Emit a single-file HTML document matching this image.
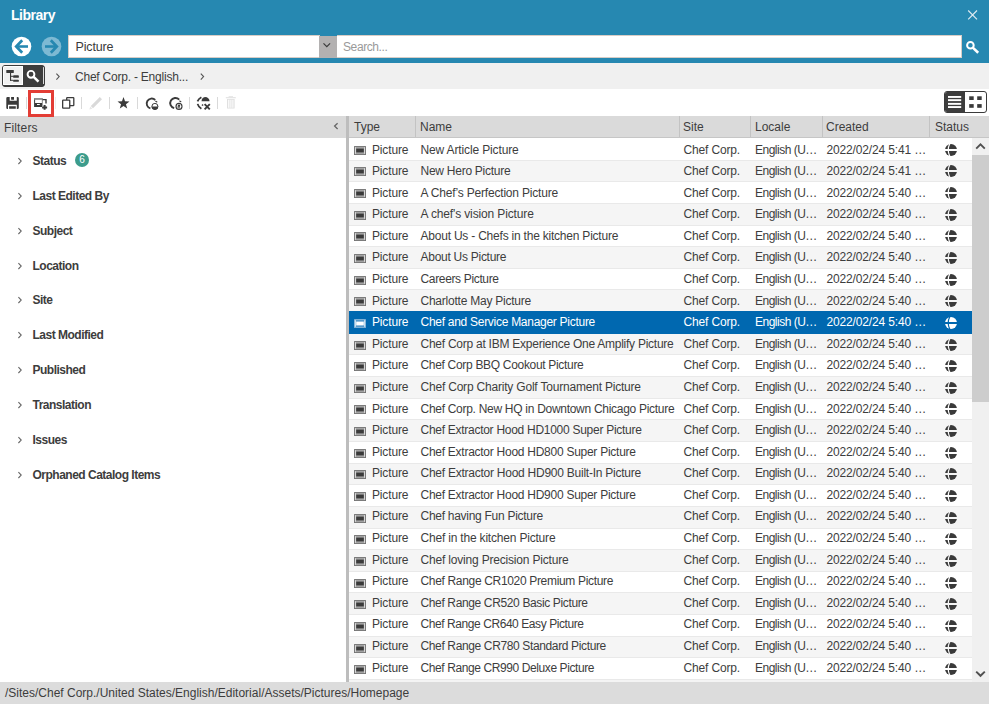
<!DOCTYPE html>
<html><head><meta charset="utf-8">
<style>
*{margin:0;padding:0;box-sizing:border-box}
html,body{width:989px;height:704px;overflow:hidden;background:#fff}
body{position:relative;font-family:"Liberation Sans",sans-serif;color:#3d3d3d;font-size:12px}
.abs{position:absolute}
#hdr{position:absolute;left:0;top:0;width:989px;height:63px;background:#2688b1}
#title{position:absolute;left:11px;top:7px;font-size:14px;font-weight:bold;color:#fff;line-height:16px;letter-spacing:-0.5px}
#bc{position:absolute;left:0;top:63px;width:989px;height:26px;background:#f0f0f0}
#tb{position:absolute;left:0;top:89px;width:989px;height:27px;background:#fff}
.sep{position:absolute;top:97px;width:1px;height:12px;background:#d9d9d9}
#lp{position:absolute;left:0;top:116px;width:346px;height:566px;background:#fff}
#lph{position:absolute;left:0;top:0;width:346px;height:22px;background:#dadada}
#split{position:absolute;left:346px;top:116px;width:3px;height:566px;background:#bdbdbd}
#grid{position:absolute;left:349px;top:116px;width:640px;height:566px;background:#f4f4f4}
#gh{position:absolute;left:0;top:0;width:640px;height:22px;background:#dadada;border-bottom:1px solid #c6c6c6}
.hc{position:absolute;top:0;height:21px;line-height:14px;padding-top:4px;white-space:nowrap}
.hd{position:absolute;top:0;width:1px;height:21px;background:#c3c3c3}
#rows{position:absolute;left:0;top:22px;width:623px;height:544px;overflow:hidden}
.r{position:absolute;left:349px;width:623px;height:21.64px;background:#fff}
.r::before{content:"";position:absolute;left:0;top:0;width:623px;height:1px;background:#e9e9e9}
.r.first::before{display:none}
.r.odd{background:#f5f5f5}
.r.sel{background:#0068b0;color:#fff}
.r.sel::before{background:#0068b0}
.r.aftersel::before{background:#0068b0}
.c{position:absolute;top:var(--dy);line-height:14px;white-space:nowrap;letter-spacing:-0.15px}
.c1{left:23px}
.c2{left:71.5px}
.c3{left:334.5px}
.c4{left:406px;letter-spacing:-0.5px}
.c5{left:477.5px}
.pi{position:absolute;left:5px;top:7.8px}
.gl{position:absolute;left:595px;top:4.8px}
#sb{position:absolute;left:972px;top:138px;width:17px;height:544px;background:#f0f0f0}
#thumb{position:absolute;left:0;top:17px;width:17px;height:247px;background:#cdcdcd}
#ftr{position:absolute;left:0;top:682px;width:989px;height:22px;background:#dcdcdc}
#ftr span{position:absolute;left:5px;top:4px;line-height:14px;white-space:nowrap}
.fi{position:absolute;left:0;height:16px;width:340px}
.fi .chev{position:absolute;left:16px;top:3.5px}
.fi .fl{position:absolute;left:32.5px;top:1.5px;font-weight:bold;line-height:14px;letter-spacing:-0.5px;white-space:nowrap}
.badge{position:absolute;left:75px;top:1px;width:14px;height:14px;border-radius:7px;background:#3c9c8c;color:#fff;font-size:10px;line-height:14px;text-align:center;font-weight:normal}
</style></head>
<body>
<div id="hdr">
  <div id="title">Library</div>
  <svg class="abs" style="left:966px;top:8px" width="13" height="13" viewBox="0 0 13 13"><path d="M2.2 2.5 L11 11.3 M11 2.5 L2.2 11.3" stroke="#dbe9f0" stroke-width="1.2"/></svg>
  <!-- back -->
  <svg class="abs" style="left:11px;top:36px" width="21" height="21" viewBox="0 0 21 21"><circle cx="10.5" cy="10.5" r="9.8" fill="#fff"/><path d="M5 10.5 H17" fill="none" stroke="#2688b1" stroke-width="2.6"/><path d="M11.2 4.3 L5.2 10.5 L11.2 16.7" fill="none" stroke="#2688b1" stroke-width="2.7"/></svg>
  <!-- forward -->
  <svg class="abs" style="left:41px;top:36px" width="21" height="21" viewBox="0 0 21 21"><circle cx="10.5" cy="10.5" r="9.8" fill="#7db9d3"/><path d="M4 10.5 H16" fill="none" stroke="#2688b1" stroke-width="2.6"/><path d="M9.8 4.3 L15.8 10.5 L9.8 16.7" fill="none" stroke="#2688b1" stroke-width="2.7"/></svg>
  <div class="abs" style="left:68px;top:35px;width:252px;height:23px;background:#fff;border:1px solid #d8cdc6"></div>
  <div class="abs" style="left:75.5px;top:39.5px;font-size:12.5px;line-height:14px;color:#3a3a3a;letter-spacing:-0.15px">Picture</div>
  <div class="abs" style="left:319px;top:35.5px;width:18px;height:22px;background:#b3b1b1"></div>
  <svg class="abs" style="left:322px;top:41px" width="10" height="8" viewBox="0 0 10 8"><path d="M1.5 2.3 L4.8 5.6 L8.1 2.3" fill="none" stroke="#3a3a3a" stroke-width="1.2"/></svg>
  <div class="abs" style="left:337px;top:35px;width:625px;height:23px;background:#fff;border:1px solid #d8cdc6;border-left:0"></div>
  <div class="abs" style="left:343px;top:40px;line-height:14px;color:#9a9a9a;letter-spacing:-0.4px">Search...</div>
  <svg class="abs" style="left:964px;top:39px" width="17" height="16" viewBox="0 0 17 16"><circle cx="6.4" cy="6.2" r="3.3" fill="none" stroke="#fff" stroke-width="2"/><path d="M8.8 8.6 L14.2 13.8" stroke="#fff" stroke-width="2.6" stroke-linecap="butt"/></svg>
</div>

<div id="bc">
  <div class="abs" style="left:2px;top:2px;width:43px;height:22px;border:1.5px solid #3a3a3a;border-radius:3px;background:#3d3d3d;overflow:hidden">
    <div class="abs" style="left:0;top:0;width:20px;height:19px;background:#f0f0f0;border:1px solid #fff"></div>
    <div class="abs" style="left:40px;top:1px;width:1px;height:17px;background:#ddd"></div>
  </div>
  <svg class="abs" style="left:5px;top:5px" width="16" height="16" viewBox="0 0 16 16"><rect x="1.3" y="2.1" width="7.5" height="2.8" rx="0.3" fill="#3a3a3a"/><rect x="5" y="4.8" width="1.1" height="8" fill="#3a3a3a"/><rect x="5" y="7.8" width="3.4" height="1" fill="#3a3a3a"/><rect x="5" y="11.8" width="3.4" height="1" fill="#3a3a3a"/><rect x="8.1" y="7.3" width="5.8" height="2.5" rx="0.9" fill="#3a3a3a"/><rect x="8.1" y="11.7" width="5.8" height="2.1" rx="0.9" fill="#3a3a3a"/></svg>
  <svg class="abs" style="left:24px;top:3px" width="18" height="18" viewBox="0 0 18 18"><circle cx="7" cy="8.3" r="3.4" fill="none" stroke="#fff" stroke-width="1.9"/><path d="M9.4 10.6 L14.5 15.6" stroke="#fff" stroke-width="2.6"/></svg>
  <svg class="abs" style="left:54px;top:9px" width="8" height="10" viewBox="0 0 8 10"><path d="M2.4 1.6 L5.2 4.6 L2.4 7.6" fill="none" stroke="#555" stroke-width="1.1"/></svg>
  <div class="abs" style="left:75px;top:6.5px;line-height:14px;color:#3d3d3d;letter-spacing:-0.22px">Chef Corp. - English...</div>
  <svg class="abs" style="left:198px;top:9px" width="8" height="10" viewBox="0 0 8 10"><path d="M2.8 1.6 L5.6 4.6 L2.8 7.6" fill="none" stroke="#555" stroke-width="1.1"/></svg>
</div>

<div id="tb">
  <!-- save -->
  <svg class="abs" style="left:6px;top:8px" width="14" height="13" viewBox="0 0 14 13"><path fill="#3a3a3a" d="M1.5 0 H3.7 V3.8 H10.8 V0 H11.5 Q12.8 0 12.8 1.3 V10.7 Q12.8 12 11.5 12 H10.8 V7.8 H2 V12 H1.5 Q0.3 12 0.3 10.7 V1.3 Q0.3 0 1.5 0 Z M5.1 0.1 H8 V2.8 H5.1 Z M3.1 9.2 H9.8 V11.8 H3.1 Z"/></svg>
  <div class="sep" style="left:26px;top:8px"></div>
  <!-- red box -->
  <div class="abs" style="left:28px;top:0.8px;width:26px;height:26.8px;border:3px solid #e33d35;z-index:5"></div>
  <svg class="abs" style="left:33px;top:8px" width="16" height="14" viewBox="0 0 16 14"><path fill="#3a3a3a" d="M1.1 1.1 H9.5 V10 H1.1 Z M2.1 2.6 V6 H8.9 V2.6 Z M4 7.1 V8.1 H6.8 V7.1 Z" fill-rule="evenodd"/><rect x="1.1" y="1.1" width="8.4" height="1.5" fill="#9a9a9a"/><path d="M9.5 2.6 H13 V6.6" fill="none" stroke="#3a3a3a" stroke-width="1.4"/><path d="M11.6 8.2 V12.6 M9.2 10.4 H14" stroke="#fff" stroke-width="3.2"/><path d="M11.6 8 V12.8 M9.1 10.4 H14.1" stroke="#3a3a3a" stroke-width="2"/></svg>
  <div class="sep" style="left:55px;top:8px;background:#eee"></div>
  <!-- copy -->
  <svg class="abs" style="left:61px;top:7px" width="14" height="13" viewBox="0 0 14 13"><rect x="5.7" y="1.65" width="7.1" height="7.9" rx="0.6" fill="#fff" stroke="#3a3a3a" stroke-width="1.3"/><rect x="1.65" y="4.1" width="7.1" height="8" rx="0.6" fill="#fff" stroke="#3a3a3a" stroke-width="1.3"/></svg>
  <div class="sep" style="left:81px;top:8px"></div>
  <!-- pencil -->
  <svg class="abs" style="left:88px;top:7px" width="15" height="14" viewBox="0 0 15 14"><path d="M2.8 10 L11.8 1 L14 3.2 L5 12.2 Z" fill="#d9d9d9"/><path d="M2.2 10.6 L4.4 12.8 L1.4 13.6 Z" fill="#e6e6e6"/></svg>
  <div class="sep" style="left:109px;top:8px"></div>
  <!-- star -->
  <svg class="abs" style="left:117px;top:7.5px" width="13" height="13" viewBox="0 0 13 13"><path fill="#3a3a3a" d="M6.50 0.10 L8.03 4.30 L12.49 4.45 L8.97 7.20 L10.20 11.50 L6.50 9.00 L2.80 11.50 L4.03 7.20 L0.51 4.45 L4.97 4.30 Z"/></svg>
  <div class="sep" style="left:137px;top:8px"></div>
  <!-- sync 1 -->
  <svg class="abs" style="left:144px;top:7px" width="16" height="15" viewBox="0 0 16 15"><path d="M11.2 4 A5 5 0 1 0 6.4 12.4" fill="none" stroke="#3a3a3a" stroke-width="1.9"/><path d="M11.4 5 L13.2 6.2" stroke="#3a3a3a" stroke-width="1.1"/><circle cx="10.9" cy="10.4" r="3.9" fill="#fff"/><circle cx="10.9" cy="10.4" r="3" fill="#fff" stroke="#3a3a3a" stroke-width="1"/><path d="M7.6 10.6 A3.3 3.3 0 0 0 14.2 10.6 Z" fill="#3a3a3a"/></svg>
  <!-- sync 2 -->
  <svg class="abs" style="left:167px;top:7px" width="17" height="15" viewBox="0 0 17 15"><path d="M12.2 3.6 A5.2 5.2 0 1 0 7.2 12.2" fill="none" stroke="#3a3a3a" stroke-width="1.9"/><path d="M12.4 4.8 L14.2 6" stroke="#3a3a3a" stroke-width="1.1"/><circle cx="12" cy="10.4" r="3.9" fill="#fff"/><circle cx="12" cy="10.4" r="3" fill="#fff" stroke="#3a3a3a" stroke-width="1.1"/><circle cx="12" cy="9.8" r="1.2" fill="#3a3a3a"/><path d="M10 10.4 Q10.8 12.4 13.2 11.9" fill="none" stroke="#3a3a3a" stroke-width="0.9"/></svg>
  <div class="sep" style="left:189px;top:8px"></div>
  <!-- globe x -->
  <svg class="abs" style="left:196px;top:7px" width="16" height="15" viewBox="0 0 16 15"><path d="M5.5 5.3 Q5.8 1.4 9 1 Q13.2 1.2 13.6 5.3 Z" fill="#3a3a3a"/><path d="M5.4 1.2 Q2.6 2.6 1.5 5.3" fill="none" stroke="#3a3a3a" stroke-width="1.8"/><path d="M1.6 7.9 Q2.4 11 5.4 12.8" fill="none" stroke="#3a3a3a" stroke-width="1.8"/><path d="M5.9 8.6 L7.2 9.5" stroke="#3a3a3a" stroke-width="1.3"/><path d="M8.6 8.1 L13.8 13.3 M13.8 8.1 L8.6 13.3" stroke="#3a3a3a" stroke-width="1.9"/></svg>
  <div class="sep" style="left:217px;top:8px"></div>
  <!-- trash -->
  <svg class="abs" style="left:225px;top:7px" width="12" height="13" viewBox="0 0 12 13"><rect x="0.8" y="1.1" width="10" height="1.2" fill="#e3e3e3"/><rect x="3.6" y="0.2" width="4.4" height="1" fill="#e3e3e3"/><path d="M2 3 H9.6 V12.6 H2 Z M3.2 3.8 V11.8 H4.4 V3.8 Z M5.4 3.8 V11.8 H6.4 V3.8 Z M7.4 3.8 V11.8 H8.4 V3.8 Z" fill="#e0e0e0" fill-rule="evenodd"/></svg>
  <!-- list/grid toggle -->
  <div class="abs" style="left:944px;top:2px;width:43px;height:22px;border:1.2px solid #3a3a3a;border-radius:3px;background:#fff;overflow:hidden">
    <div class="abs" style="left:0;top:0;width:20px;height:20px;background:#3d3d3d"></div>
  </div>
  <svg class="abs" style="left:944px;top:2px" width="43" height="22" viewBox="0 0 43 22"><g fill="#fff"><rect x="4" y="5" width="13.2" height="1.9"/><rect x="4" y="8.2" width="13.2" height="1.9"/><rect x="4" y="11.9" width="13.2" height="1.9"/><rect x="4" y="15.1" width="13.2" height="1.9"/></g><g fill="#3a3a3a"><rect x="25.2" y="5.3" width="4.5" height="3.7"/><rect x="33.2" y="5.3" width="4.5" height="3.7"/><rect x="25.2" y="13.1" width="4.5" height="3.7"/><rect x="33.2" y="13.1" width="4.5" height="3.7"/></g></svg>
</div>

<div id="lp">
  <div id="lph">
    <div class="abs" style="left:4px;top:4.5px;line-height:14px;color:#3d3d3d;letter-spacing:0.15px">Filters</div>
    <svg class="abs" style="left:331px;top:6px" width="9" height="10" viewBox="0 0 9 10"><path d="M6.6 1.3 L3.6 4.1 L6.6 6.9" fill="none" stroke="#666" stroke-width="1.3"/></svg>
  </div>
</div>
<div class="fi" style="top:152.30px"><svg class="chev" width="8" height="10" viewBox="0 0 8 10"><path d="M2.4 2.2 L5.2 5.1 L2.4 8" fill="none" stroke="#666" stroke-width="1.1"/></svg><span class="fl">Status</span><span class="badge">6</span></div>
<div class="fi" style="top:187.20px"><svg class="chev" width="8" height="10" viewBox="0 0 8 10"><path d="M2.4 2.2 L5.2 5.1 L2.4 8" fill="none" stroke="#666" stroke-width="1.1"/></svg><span class="fl">Last Edited By</span></div>
<div class="fi" style="top:222.10px"><svg class="chev" width="8" height="10" viewBox="0 0 8 10"><path d="M2.4 2.2 L5.2 5.1 L2.4 8" fill="none" stroke="#666" stroke-width="1.1"/></svg><span class="fl">Subject</span></div>
<div class="fi" style="top:257.00px"><svg class="chev" width="8" height="10" viewBox="0 0 8 10"><path d="M2.4 2.2 L5.2 5.1 L2.4 8" fill="none" stroke="#666" stroke-width="1.1"/></svg><span class="fl">Location</span></div>
<div class="fi" style="top:291.90px"><svg class="chev" width="8" height="10" viewBox="0 0 8 10"><path d="M2.4 2.2 L5.2 5.1 L2.4 8" fill="none" stroke="#666" stroke-width="1.1"/></svg><span class="fl">Site</span></div>
<div class="fi" style="top:326.80px"><svg class="chev" width="8" height="10" viewBox="0 0 8 10"><path d="M2.4 2.2 L5.2 5.1 L2.4 8" fill="none" stroke="#666" stroke-width="1.1"/></svg><span class="fl">Last Modified</span></div>
<div class="fi" style="top:361.70px"><svg class="chev" width="8" height="10" viewBox="0 0 8 10"><path d="M2.4 2.2 L5.2 5.1 L2.4 8" fill="none" stroke="#666" stroke-width="1.1"/></svg><span class="fl">Published</span></div>
<div class="fi" style="top:396.60px"><svg class="chev" width="8" height="10" viewBox="0 0 8 10"><path d="M2.4 2.2 L5.2 5.1 L2.4 8" fill="none" stroke="#666" stroke-width="1.1"/></svg><span class="fl">Translation</span></div>
<div class="fi" style="top:431.50px"><svg class="chev" width="8" height="10" viewBox="0 0 8 10"><path d="M2.4 2.2 L5.2 5.1 L2.4 8" fill="none" stroke="#666" stroke-width="1.1"/></svg><span class="fl">Issues</span></div>
<div class="fi" style="top:466.40px"><svg class="chev" width="8" height="10" viewBox="0 0 8 10"><path d="M2.4 2.2 L5.2 5.1 L2.4 8" fill="none" stroke="#666" stroke-width="1.1"/></svg><span class="fl">Orphaned Catalog Items</span></div>
<div id="split"></div>

<div id="grid">
  <div id="gh">
    <div class="hc" style="left:5px">Type</div>
    <div class="hd" style="left:66px"></div>
    <div class="hc" style="left:71px">Name</div>
    <div class="hd" style="left:330px"></div>
    <div class="hc" style="left:334px">Site</div>
    <div class="hd" style="left:401px"></div>
    <div class="hc" style="left:406px">Locale</div>
    <div class="hd" style="left:473px"></div>
    <div class="hc" style="left:477px">Created</div>
    <div class="hd" style="left:580px"></div>
    <div class="hc" style="left:586px">Status</div>
  </div>
</div>
<div class="r first" style="top:138.00px;--dy:4.60px"><svg class="pi" width="12" height="9" viewBox="0 0 12 9"><rect x="0" y="0" width="12" height="9" rx="0.6" fill="#6a6a6a"/><rect x="0.7" y="0.7" width="10.6" height="7.6" fill="#a3a3a3"/><rect x="2.2" y="2.6" width="7.6" height="3.8" fill="#3a3a3a"/><rect x="1.1" y="1.2" width="0.8" height="6.6" fill="#e6e6e6"/><rect x="10.1" y="1.2" width="0.8" height="6.6" fill="#e6e6e6"/></svg><span class="c c1">Picture</span><span class="c c2" style="letter-spacing:-0.139px">New Article Picture</span><span class="c c3">Chef Corp.</span><span class="c c4">English (U…</span><span class="c c5">2022/02/24 5:41 …</span><svg class="gl" width="14" height="14" viewBox="-1 -1 14 14"><circle cx="6" cy="6" r="6" fill="#3a3a3a"/><rect x="-1" y="5" width="14" height="2" fill="#ffffff"/><path d="M4.9 -0.5 Q1.5 6 4.9 12.5" fill="none" stroke="#ffffff" stroke-width="1.2"/></svg></div>
<div class="r odd" style="top:159.64px;--dy:4.54px"><svg class="pi" width="12" height="9" viewBox="0 0 12 9"><rect x="0" y="0" width="12" height="9" rx="0.6" fill="#6a6a6a"/><rect x="0.7" y="0.7" width="10.6" height="7.6" fill="#a3a3a3"/><rect x="2.2" y="2.6" width="7.6" height="3.8" fill="#3a3a3a"/><rect x="1.1" y="1.2" width="0.8" height="6.6" fill="#e6e6e6"/><rect x="10.1" y="1.2" width="0.8" height="6.6" fill="#e6e6e6"/></svg><span class="c c1">Picture</span><span class="c c2" style="letter-spacing:-0.257px">New Hero Picture</span><span class="c c3">Chef Corp.</span><span class="c c4">English (U…</span><span class="c c5">2022/02/24 5:41 …</span><svg class="gl" width="14" height="14" viewBox="-1 -1 14 14"><circle cx="6" cy="6" r="6" fill="#3a3a3a"/><rect x="-1" y="5" width="14" height="2" fill="#f5f5f5"/><path d="M4.9 -0.5 Q1.5 6 4.9 12.5" fill="none" stroke="#f5f5f5" stroke-width="1.2"/></svg></div>
<div class="r" style="top:181.28px;--dy:4.48px"><svg class="pi" width="12" height="9" viewBox="0 0 12 9"><rect x="0" y="0" width="12" height="9" rx="0.6" fill="#6a6a6a"/><rect x="0.7" y="0.7" width="10.6" height="7.6" fill="#a3a3a3"/><rect x="2.2" y="2.6" width="7.6" height="3.8" fill="#3a3a3a"/><rect x="1.1" y="1.2" width="0.8" height="6.6" fill="#e6e6e6"/><rect x="10.1" y="1.2" width="0.8" height="6.6" fill="#e6e6e6"/></svg><span class="c c1">Picture</span><span class="c c2" style="letter-spacing:-0.196px">A Chef’s Perfection Picture</span><span class="c c3">Chef Corp.</span><span class="c c4">English (U…</span><span class="c c5">2022/02/24 5:40 …</span><svg class="gl" width="14" height="14" viewBox="-1 -1 14 14"><circle cx="6" cy="6" r="6" fill="#3a3a3a"/><rect x="-1" y="5" width="14" height="2" fill="#ffffff"/><path d="M4.9 -0.5 Q1.5 6 4.9 12.5" fill="none" stroke="#ffffff" stroke-width="1.2"/></svg></div>
<div class="r odd" style="top:202.92px;--dy:4.42px"><svg class="pi" width="12" height="9" viewBox="0 0 12 9"><rect x="0" y="0" width="12" height="9" rx="0.6" fill="#6a6a6a"/><rect x="0.7" y="0.7" width="10.6" height="7.6" fill="#a3a3a3"/><rect x="2.2" y="2.6" width="7.6" height="3.8" fill="#3a3a3a"/><rect x="1.1" y="1.2" width="0.8" height="6.6" fill="#e6e6e6"/><rect x="10.1" y="1.2" width="0.8" height="6.6" fill="#e6e6e6"/></svg><span class="c c1">Picture</span><span class="c c2" style="letter-spacing:-0.136px">A chef's vision Picture</span><span class="c c3">Chef Corp.</span><span class="c c4">English (U…</span><span class="c c5">2022/02/24 5:40 …</span><svg class="gl" width="14" height="14" viewBox="-1 -1 14 14"><circle cx="6" cy="6" r="6" fill="#3a3a3a"/><rect x="-1" y="5" width="14" height="2" fill="#f5f5f5"/><path d="M4.9 -0.5 Q1.5 6 4.9 12.5" fill="none" stroke="#f5f5f5" stroke-width="1.2"/></svg></div>
<div class="r" style="top:224.56px;--dy:4.36px"><svg class="pi" width="12" height="9" viewBox="0 0 12 9"><rect x="0" y="0" width="12" height="9" rx="0.6" fill="#6a6a6a"/><rect x="0.7" y="0.7" width="10.6" height="7.6" fill="#a3a3a3"/><rect x="2.2" y="2.6" width="7.6" height="3.8" fill="#3a3a3a"/><rect x="1.1" y="1.2" width="0.8" height="6.6" fill="#e6e6e6"/><rect x="10.1" y="1.2" width="0.8" height="6.6" fill="#e6e6e6"/></svg><span class="c c1">Picture</span><span class="c c2" style="letter-spacing:-0.216px">About Us - Chefs in the kitchen Picture</span><span class="c c3">Chef Corp.</span><span class="c c4">English (U…</span><span class="c c5">2022/02/24 5:40 …</span><svg class="gl" width="14" height="14" viewBox="-1 -1 14 14"><circle cx="6" cy="6" r="6" fill="#3a3a3a"/><rect x="-1" y="5" width="14" height="2" fill="#ffffff"/><path d="M4.9 -0.5 Q1.5 6 4.9 12.5" fill="none" stroke="#ffffff" stroke-width="1.2"/></svg></div>
<div class="r odd" style="top:246.20px;--dy:4.30px"><svg class="pi" width="12" height="9" viewBox="0 0 12 9"><rect x="0" y="0" width="12" height="9" rx="0.6" fill="#6a6a6a"/><rect x="0.7" y="0.7" width="10.6" height="7.6" fill="#a3a3a3"/><rect x="2.2" y="2.6" width="7.6" height="3.8" fill="#3a3a3a"/><rect x="1.1" y="1.2" width="0.8" height="6.6" fill="#e6e6e6"/><rect x="10.1" y="1.2" width="0.8" height="6.6" fill="#e6e6e6"/></svg><span class="c c1">Picture</span><span class="c c2" style="letter-spacing:-0.270px">About Us Picture</span><span class="c c3">Chef Corp.</span><span class="c c4">English (U…</span><span class="c c5">2022/02/24 5:40 …</span><svg class="gl" width="14" height="14" viewBox="-1 -1 14 14"><circle cx="6" cy="6" r="6" fill="#3a3a3a"/><rect x="-1" y="5" width="14" height="2" fill="#f5f5f5"/><path d="M4.9 -0.5 Q1.5 6 4.9 12.5" fill="none" stroke="#f5f5f5" stroke-width="1.2"/></svg></div>
<div class="r" style="top:267.84px;--dy:4.24px"><svg class="pi" width="12" height="9" viewBox="0 0 12 9"><rect x="0" y="0" width="12" height="9" rx="0.6" fill="#6a6a6a"/><rect x="0.7" y="0.7" width="10.6" height="7.6" fill="#a3a3a3"/><rect x="2.2" y="2.6" width="7.6" height="3.8" fill="#3a3a3a"/><rect x="1.1" y="1.2" width="0.8" height="6.6" fill="#e6e6e6"/><rect x="10.1" y="1.2" width="0.8" height="6.6" fill="#e6e6e6"/></svg><span class="c c1">Picture</span><span class="c c2" style="letter-spacing:-0.346px">Careers Picture</span><span class="c c3">Chef Corp.</span><span class="c c4">English (U…</span><span class="c c5">2022/02/24 5:40 …</span><svg class="gl" width="14" height="14" viewBox="-1 -1 14 14"><circle cx="6" cy="6" r="6" fill="#3a3a3a"/><rect x="-1" y="5" width="14" height="2" fill="#ffffff"/><path d="M4.9 -0.5 Q1.5 6 4.9 12.5" fill="none" stroke="#ffffff" stroke-width="1.2"/></svg></div>
<div class="r odd" style="top:289.48px;--dy:4.18px"><svg class="pi" width="12" height="9" viewBox="0 0 12 9"><rect x="0" y="0" width="12" height="9" rx="0.6" fill="#6a6a6a"/><rect x="0.7" y="0.7" width="10.6" height="7.6" fill="#a3a3a3"/><rect x="2.2" y="2.6" width="7.6" height="3.8" fill="#3a3a3a"/><rect x="1.1" y="1.2" width="0.8" height="6.6" fill="#e6e6e6"/><rect x="10.1" y="1.2" width="0.8" height="6.6" fill="#e6e6e6"/></svg><span class="c c1">Picture</span><span class="c c2" style="letter-spacing:-0.235px">Charlotte May Picture</span><span class="c c3">Chef Corp.</span><span class="c c4">English (U…</span><span class="c c5">2022/02/24 5:40 …</span><svg class="gl" width="14" height="14" viewBox="-1 -1 14 14"><circle cx="6" cy="6" r="6" fill="#3a3a3a"/><rect x="-1" y="5" width="14" height="2" fill="#f5f5f5"/><path d="M4.9 -0.5 Q1.5 6 4.9 12.5" fill="none" stroke="#f5f5f5" stroke-width="1.2"/></svg></div>
<div class="r sel" style="top:311.12px;--dy:4.12px"><svg class="pi" width="12" height="9" viewBox="0 0 12 9"><rect x="0" y="0" width="12" height="9" rx="0.6" fill="#7fb0d6"/><rect x="1.2" y="1.2" width="9.6" height="6.6" fill="#4d93c8"/><rect x="2.2" y="2.6" width="7.6" height="3.8" fill="#fff"/><rect x="0.9" y="1.2" width="0.8" height="6.6" fill="#fff"/><rect x="10.3" y="1.2" width="0.8" height="6.6" fill="#fff"/></svg><span class="c c1">Picture</span><span class="c c2" style="letter-spacing:-0.279px">Chef and Service Manager Picture</span><span class="c c3">Chef Corp.</span><span class="c c4">English (U…</span><span class="c c5">2022/02/24 5:40 …</span><svg class="gl" width="14" height="14" viewBox="-1 -1 14 14"><circle cx="6" cy="6" r="6" fill="#fff"/><rect x="-1" y="5" width="14" height="2" fill="#0068b0"/><path d="M4.9 -0.5 Q1.5 6 4.9 12.5" fill="none" stroke="#0068b0" stroke-width="1.2"/></svg></div>
<div class="r odd aftersel" style="top:332.76px;--dy:4.06px"><svg class="pi" width="12" height="9" viewBox="0 0 12 9"><rect x="0" y="0" width="12" height="9" rx="0.6" fill="#6a6a6a"/><rect x="0.7" y="0.7" width="10.6" height="7.6" fill="#a3a3a3"/><rect x="2.2" y="2.6" width="7.6" height="3.8" fill="#3a3a3a"/><rect x="1.1" y="1.2" width="0.8" height="6.6" fill="#e6e6e6"/><rect x="10.1" y="1.2" width="0.8" height="6.6" fill="#e6e6e6"/></svg><span class="c c1">Picture</span><span class="c c2" style="letter-spacing:-0.250px">Chef Corp at IBM Experience One Amplify Picture</span><span class="c c3">Chef Corp.</span><span class="c c4">English (U…</span><span class="c c5">2022/02/24 5:40 …</span><svg class="gl" width="14" height="14" viewBox="-1 -1 14 14"><circle cx="6" cy="6" r="6" fill="#3a3a3a"/><rect x="-1" y="5" width="14" height="2" fill="#f5f5f5"/><path d="M4.9 -0.5 Q1.5 6 4.9 12.5" fill="none" stroke="#f5f5f5" stroke-width="1.2"/></svg></div>
<div class="r" style="top:354.40px;--dy:4.00px"><svg class="pi" width="12" height="9" viewBox="0 0 12 9"><rect x="0" y="0" width="12" height="9" rx="0.6" fill="#6a6a6a"/><rect x="0.7" y="0.7" width="10.6" height="7.6" fill="#a3a3a3"/><rect x="2.2" y="2.6" width="7.6" height="3.8" fill="#3a3a3a"/><rect x="1.1" y="1.2" width="0.8" height="6.6" fill="#e6e6e6"/><rect x="10.1" y="1.2" width="0.8" height="6.6" fill="#e6e6e6"/></svg><span class="c c1">Picture</span><span class="c c2" style="letter-spacing:-0.314px">Chef Corp BBQ Cookout Picture</span><span class="c c3">Chef Corp.</span><span class="c c4">English (U…</span><span class="c c5">2022/02/24 5:40 …</span><svg class="gl" width="14" height="14" viewBox="-1 -1 14 14"><circle cx="6" cy="6" r="6" fill="#3a3a3a"/><rect x="-1" y="5" width="14" height="2" fill="#ffffff"/><path d="M4.9 -0.5 Q1.5 6 4.9 12.5" fill="none" stroke="#ffffff" stroke-width="1.2"/></svg></div>
<div class="r odd" style="top:376.04px;--dy:3.94px"><svg class="pi" width="12" height="9" viewBox="0 0 12 9"><rect x="0" y="0" width="12" height="9" rx="0.6" fill="#6a6a6a"/><rect x="0.7" y="0.7" width="10.6" height="7.6" fill="#a3a3a3"/><rect x="2.2" y="2.6" width="7.6" height="3.8" fill="#3a3a3a"/><rect x="1.1" y="1.2" width="0.8" height="6.6" fill="#e6e6e6"/><rect x="10.1" y="1.2" width="0.8" height="6.6" fill="#e6e6e6"/></svg><span class="c c1">Picture</span><span class="c c2" style="letter-spacing:-0.200px">Chef Corp Charity Golf Tournament Picture</span><span class="c c3">Chef Corp.</span><span class="c c4">English (U…</span><span class="c c5">2022/02/24 5:40 …</span><svg class="gl" width="14" height="14" viewBox="-1 -1 14 14"><circle cx="6" cy="6" r="6" fill="#3a3a3a"/><rect x="-1" y="5" width="14" height="2" fill="#f5f5f5"/><path d="M4.9 -0.5 Q1.5 6 4.9 12.5" fill="none" stroke="#f5f5f5" stroke-width="1.2"/></svg></div>
<div class="r" style="top:397.68px;--dy:3.88px"><svg class="pi" width="12" height="9" viewBox="0 0 12 9"><rect x="0" y="0" width="12" height="9" rx="0.6" fill="#6a6a6a"/><rect x="0.7" y="0.7" width="10.6" height="7.6" fill="#a3a3a3"/><rect x="2.2" y="2.6" width="7.6" height="3.8" fill="#3a3a3a"/><rect x="1.1" y="1.2" width="0.8" height="6.6" fill="#e6e6e6"/><rect x="10.1" y="1.2" width="0.8" height="6.6" fill="#e6e6e6"/></svg><span class="c c1">Picture</span><span class="c c2" style="letter-spacing:-0.289px">Chef Corp. New HQ in Downtown Chicago Picture</span><span class="c c3">Chef Corp.</span><span class="c c4">English (U…</span><span class="c c5">2022/02/24 5:40 …</span><svg class="gl" width="14" height="14" viewBox="-1 -1 14 14"><circle cx="6" cy="6" r="6" fill="#3a3a3a"/><rect x="-1" y="5" width="14" height="2" fill="#ffffff"/><path d="M4.9 -0.5 Q1.5 6 4.9 12.5" fill="none" stroke="#ffffff" stroke-width="1.2"/></svg></div>
<div class="r odd" style="top:419.32px;--dy:3.82px"><svg class="pi" width="12" height="9" viewBox="0 0 12 9"><rect x="0" y="0" width="12" height="9" rx="0.6" fill="#6a6a6a"/><rect x="0.7" y="0.7" width="10.6" height="7.6" fill="#a3a3a3"/><rect x="2.2" y="2.6" width="7.6" height="3.8" fill="#3a3a3a"/><rect x="1.1" y="1.2" width="0.8" height="6.6" fill="#e6e6e6"/><rect x="10.1" y="1.2" width="0.8" height="6.6" fill="#e6e6e6"/></svg><span class="c c1">Picture</span><span class="c c2" style="letter-spacing:-0.276px">Chef Extractor Hood HD1000 Super Picture</span><span class="c c3">Chef Corp.</span><span class="c c4">English (U…</span><span class="c c5">2022/02/24 5:40 …</span><svg class="gl" width="14" height="14" viewBox="-1 -1 14 14"><circle cx="6" cy="6" r="6" fill="#3a3a3a"/><rect x="-1" y="5" width="14" height="2" fill="#f5f5f5"/><path d="M4.9 -0.5 Q1.5 6 4.9 12.5" fill="none" stroke="#f5f5f5" stroke-width="1.2"/></svg></div>
<div class="r" style="top:440.96px;--dy:3.76px"><svg class="pi" width="12" height="9" viewBox="0 0 12 9"><rect x="0" y="0" width="12" height="9" rx="0.6" fill="#6a6a6a"/><rect x="0.7" y="0.7" width="10.6" height="7.6" fill="#a3a3a3"/><rect x="2.2" y="2.6" width="7.6" height="3.8" fill="#3a3a3a"/><rect x="1.1" y="1.2" width="0.8" height="6.6" fill="#e6e6e6"/><rect x="10.1" y="1.2" width="0.8" height="6.6" fill="#e6e6e6"/></svg><span class="c c1">Picture</span><span class="c c2" style="letter-spacing:-0.263px">Chef Extractor Hood HD800 Super Picture</span><span class="c c3">Chef Corp.</span><span class="c c4">English (U…</span><span class="c c5">2022/02/24 5:40 …</span><svg class="gl" width="14" height="14" viewBox="-1 -1 14 14"><circle cx="6" cy="6" r="6" fill="#3a3a3a"/><rect x="-1" y="5" width="14" height="2" fill="#ffffff"/><path d="M4.9 -0.5 Q1.5 6 4.9 12.5" fill="none" stroke="#ffffff" stroke-width="1.2"/></svg></div>
<div class="r odd" style="top:462.60px;--dy:3.70px"><svg class="pi" width="12" height="9" viewBox="0 0 12 9"><rect x="0" y="0" width="12" height="9" rx="0.6" fill="#6a6a6a"/><rect x="0.7" y="0.7" width="10.6" height="7.6" fill="#a3a3a3"/><rect x="2.2" y="2.6" width="7.6" height="3.8" fill="#3a3a3a"/><rect x="1.1" y="1.2" width="0.8" height="6.6" fill="#e6e6e6"/><rect x="10.1" y="1.2" width="0.8" height="6.6" fill="#e6e6e6"/></svg><span class="c c1">Picture</span><span class="c c2" style="letter-spacing:-0.248px">Chef Extractor Hood HD900 Built-In Picture</span><span class="c c3">Chef Corp.</span><span class="c c4">English (U…</span><span class="c c5">2022/02/24 5:40 …</span><svg class="gl" width="14" height="14" viewBox="-1 -1 14 14"><circle cx="6" cy="6" r="6" fill="#3a3a3a"/><rect x="-1" y="5" width="14" height="2" fill="#f5f5f5"/><path d="M4.9 -0.5 Q1.5 6 4.9 12.5" fill="none" stroke="#f5f5f5" stroke-width="1.2"/></svg></div>
<div class="r" style="top:484.24px;--dy:3.64px"><svg class="pi" width="12" height="9" viewBox="0 0 12 9"><rect x="0" y="0" width="12" height="9" rx="0.6" fill="#6a6a6a"/><rect x="0.7" y="0.7" width="10.6" height="7.6" fill="#a3a3a3"/><rect x="2.2" y="2.6" width="7.6" height="3.8" fill="#3a3a3a"/><rect x="1.1" y="1.2" width="0.8" height="6.6" fill="#e6e6e6"/><rect x="10.1" y="1.2" width="0.8" height="6.6" fill="#e6e6e6"/></svg><span class="c c1">Picture</span><span class="c c2" style="letter-spacing:-0.263px">Chef Extractor Hood HD900 Super Picture</span><span class="c c3">Chef Corp.</span><span class="c c4">English (U…</span><span class="c c5">2022/02/24 5:40 …</span><svg class="gl" width="14" height="14" viewBox="-1 -1 14 14"><circle cx="6" cy="6" r="6" fill="#3a3a3a"/><rect x="-1" y="5" width="14" height="2" fill="#ffffff"/><path d="M4.9 -0.5 Q1.5 6 4.9 12.5" fill="none" stroke="#ffffff" stroke-width="1.2"/></svg></div>
<div class="r odd" style="top:505.88px;--dy:3.58px"><svg class="pi" width="12" height="9" viewBox="0 0 12 9"><rect x="0" y="0" width="12" height="9" rx="0.6" fill="#6a6a6a"/><rect x="0.7" y="0.7" width="10.6" height="7.6" fill="#a3a3a3"/><rect x="2.2" y="2.6" width="7.6" height="3.8" fill="#3a3a3a"/><rect x="1.1" y="1.2" width="0.8" height="6.6" fill="#e6e6e6"/><rect x="10.1" y="1.2" width="0.8" height="6.6" fill="#e6e6e6"/></svg><span class="c c1">Picture</span><span class="c c2" style="letter-spacing:-0.277px">Chef having Fun Picture</span><span class="c c3">Chef Corp.</span><span class="c c4">English (U…</span><span class="c c5">2022/02/24 5:40 …</span><svg class="gl" width="14" height="14" viewBox="-1 -1 14 14"><circle cx="6" cy="6" r="6" fill="#3a3a3a"/><rect x="-1" y="5" width="14" height="2" fill="#f5f5f5"/><path d="M4.9 -0.5 Q1.5 6 4.9 12.5" fill="none" stroke="#f5f5f5" stroke-width="1.2"/></svg></div>
<div class="r" style="top:527.52px;--dy:3.52px"><svg class="pi" width="12" height="9" viewBox="0 0 12 9"><rect x="0" y="0" width="12" height="9" rx="0.6" fill="#6a6a6a"/><rect x="0.7" y="0.7" width="10.6" height="7.6" fill="#a3a3a3"/><rect x="2.2" y="2.6" width="7.6" height="3.8" fill="#3a3a3a"/><rect x="1.1" y="1.2" width="0.8" height="6.6" fill="#e6e6e6"/><rect x="10.1" y="1.2" width="0.8" height="6.6" fill="#e6e6e6"/></svg><span class="c c1">Picture</span><span class="c c2" style="letter-spacing:-0.192px">Chef in the kitchen Picture</span><span class="c c3">Chef Corp.</span><span class="c c4">English (U…</span><span class="c c5">2022/02/24 5:40 …</span><svg class="gl" width="14" height="14" viewBox="-1 -1 14 14"><circle cx="6" cy="6" r="6" fill="#3a3a3a"/><rect x="-1" y="5" width="14" height="2" fill="#ffffff"/><path d="M4.9 -0.5 Q1.5 6 4.9 12.5" fill="none" stroke="#ffffff" stroke-width="1.2"/></svg></div>
<div class="r odd" style="top:549.16px;--dy:3.46px"><svg class="pi" width="12" height="9" viewBox="0 0 12 9"><rect x="0" y="0" width="12" height="9" rx="0.6" fill="#6a6a6a"/><rect x="0.7" y="0.7" width="10.6" height="7.6" fill="#a3a3a3"/><rect x="2.2" y="2.6" width="7.6" height="3.8" fill="#3a3a3a"/><rect x="1.1" y="1.2" width="0.8" height="6.6" fill="#e6e6e6"/><rect x="10.1" y="1.2" width="0.8" height="6.6" fill="#e6e6e6"/></svg><span class="c c1">Picture</span><span class="c c2" style="letter-spacing:-0.186px">Chef loving Precision Picture</span><span class="c c3">Chef Corp.</span><span class="c c4">English (U…</span><span class="c c5">2022/02/24 5:40 …</span><svg class="gl" width="14" height="14" viewBox="-1 -1 14 14"><circle cx="6" cy="6" r="6" fill="#3a3a3a"/><rect x="-1" y="5" width="14" height="2" fill="#f5f5f5"/><path d="M4.9 -0.5 Q1.5 6 4.9 12.5" fill="none" stroke="#f5f5f5" stroke-width="1.2"/></svg></div>
<div class="r" style="top:570.80px;--dy:3.40px"><svg class="pi" width="12" height="9" viewBox="0 0 12 9"><rect x="0" y="0" width="12" height="9" rx="0.6" fill="#6a6a6a"/><rect x="0.7" y="0.7" width="10.6" height="7.6" fill="#a3a3a3"/><rect x="2.2" y="2.6" width="7.6" height="3.8" fill="#3a3a3a"/><rect x="1.1" y="1.2" width="0.8" height="6.6" fill="#e6e6e6"/><rect x="10.1" y="1.2" width="0.8" height="6.6" fill="#e6e6e6"/></svg><span class="c c1">Picture</span><span class="c c2" style="letter-spacing:-0.331px">Chef Range CR1020 Premium Picture</span><span class="c c3">Chef Corp.</span><span class="c c4">English (U…</span><span class="c c5">2022/02/24 5:40 …</span><svg class="gl" width="14" height="14" viewBox="-1 -1 14 14"><circle cx="6" cy="6" r="6" fill="#3a3a3a"/><rect x="-1" y="5" width="14" height="2" fill="#ffffff"/><path d="M4.9 -0.5 Q1.5 6 4.9 12.5" fill="none" stroke="#ffffff" stroke-width="1.2"/></svg></div>
<div class="r odd" style="top:592.44px;--dy:3.34px"><svg class="pi" width="12" height="9" viewBox="0 0 12 9"><rect x="0" y="0" width="12" height="9" rx="0.6" fill="#6a6a6a"/><rect x="0.7" y="0.7" width="10.6" height="7.6" fill="#a3a3a3"/><rect x="2.2" y="2.6" width="7.6" height="3.8" fill="#3a3a3a"/><rect x="1.1" y="1.2" width="0.8" height="6.6" fill="#e6e6e6"/><rect x="10.1" y="1.2" width="0.8" height="6.6" fill="#e6e6e6"/></svg><span class="c c1">Picture</span><span class="c c2" style="letter-spacing:-0.364px">Chef Range CR520 Basic Picture</span><span class="c c3">Chef Corp.</span><span class="c c4">English (U…</span><span class="c c5">2022/02/24 5:40 …</span><svg class="gl" width="14" height="14" viewBox="-1 -1 14 14"><circle cx="6" cy="6" r="6" fill="#3a3a3a"/><rect x="-1" y="5" width="14" height="2" fill="#f5f5f5"/><path d="M4.9 -0.5 Q1.5 6 4.9 12.5" fill="none" stroke="#f5f5f5" stroke-width="1.2"/></svg></div>
<div class="r" style="top:614.08px;--dy:3.28px"><svg class="pi" width="12" height="9" viewBox="0 0 12 9"><rect x="0" y="0" width="12" height="9" rx="0.6" fill="#6a6a6a"/><rect x="0.7" y="0.7" width="10.6" height="7.6" fill="#a3a3a3"/><rect x="2.2" y="2.6" width="7.6" height="3.8" fill="#3a3a3a"/><rect x="1.1" y="1.2" width="0.8" height="6.6" fill="#e6e6e6"/><rect x="10.1" y="1.2" width="0.8" height="6.6" fill="#e6e6e6"/></svg><span class="c c1">Picture</span><span class="c c2" style="letter-spacing:-0.429px">Chef Range CR640 Easy Picture</span><span class="c c3">Chef Corp.</span><span class="c c4">English (U…</span><span class="c c5">2022/02/24 5:40 …</span><svg class="gl" width="14" height="14" viewBox="-1 -1 14 14"><circle cx="6" cy="6" r="6" fill="#3a3a3a"/><rect x="-1" y="5" width="14" height="2" fill="#ffffff"/><path d="M4.9 -0.5 Q1.5 6 4.9 12.5" fill="none" stroke="#ffffff" stroke-width="1.2"/></svg></div>
<div class="r odd" style="top:635.72px;--dy:3.22px"><svg class="pi" width="12" height="9" viewBox="0 0 12 9"><rect x="0" y="0" width="12" height="9" rx="0.6" fill="#6a6a6a"/><rect x="0.7" y="0.7" width="10.6" height="7.6" fill="#a3a3a3"/><rect x="2.2" y="2.6" width="7.6" height="3.8" fill="#3a3a3a"/><rect x="1.1" y="1.2" width="0.8" height="6.6" fill="#e6e6e6"/><rect x="10.1" y="1.2" width="0.8" height="6.6" fill="#e6e6e6"/></svg><span class="c c1">Picture</span><span class="c c2" style="letter-spacing:-0.366px">Chef Range CR780 Standard Picture</span><span class="c c3">Chef Corp.</span><span class="c c4">English (U…</span><span class="c c5">2022/02/24 5:40 …</span><svg class="gl" width="14" height="14" viewBox="-1 -1 14 14"><circle cx="6" cy="6" r="6" fill="#3a3a3a"/><rect x="-1" y="5" width="14" height="2" fill="#f5f5f5"/><path d="M4.9 -0.5 Q1.5 6 4.9 12.5" fill="none" stroke="#f5f5f5" stroke-width="1.2"/></svg></div>
<div class="r" style="top:657.36px;--dy:3.16px"><svg class="pi" width="12" height="9" viewBox="0 0 12 9"><rect x="0" y="0" width="12" height="9" rx="0.6" fill="#6a6a6a"/><rect x="0.7" y="0.7" width="10.6" height="7.6" fill="#a3a3a3"/><rect x="2.2" y="2.6" width="7.6" height="3.8" fill="#3a3a3a"/><rect x="1.1" y="1.2" width="0.8" height="6.6" fill="#e6e6e6"/><rect x="10.1" y="1.2" width="0.8" height="6.6" fill="#e6e6e6"/></svg><span class="c c1">Picture</span><span class="c c2" style="letter-spacing:-0.403px">Chef Range CR990 Deluxe Picture</span><span class="c c3">Chef Corp.</span><span class="c c4">English (U…</span><span class="c c5">2022/02/24 5:40 …</span><svg class="gl" width="14" height="14" viewBox="-1 -1 14 14"><circle cx="6" cy="6" r="6" fill="#3a3a3a"/><rect x="-1" y="5" width="14" height="2" fill="#ffffff"/><path d="M4.9 -0.5 Q1.5 6 4.9 12.5" fill="none" stroke="#ffffff" stroke-width="1.2"/></svg></div>
<div class="abs" style="left:349px;top:679px;width:623px;height:1px;background:#e9e9e9"></div>
<div id="sb">
  <div id="thumb"></div>
  <svg class="abs" style="left:3px;top:3px" width="11" height="10" viewBox="0 0 11 10"><path d="M1.2 7.6 L5.5 3.4 L9.8 7.6" fill="none" stroke="#505050" stroke-width="1.9"/></svg>
  <svg class="abs" style="left:3px;top:531px" width="11" height="10" viewBox="0 0 11 10"><path d="M1.2 2.6 L5.5 6.8 L9.8 2.6" fill="none" stroke="#505050" stroke-width="1.9"/></svg>
</div>
<div id="ftr"><span>/Sites/Chef Corp./United States/English/Editorial/Assets/Pictures/Homepage</span></div>
</body></html>
